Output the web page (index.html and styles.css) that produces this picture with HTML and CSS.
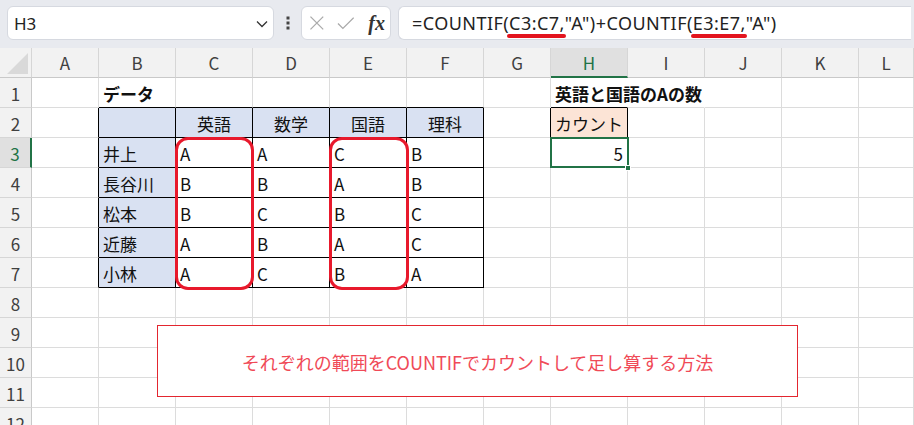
FILE: index.html
```html
<!DOCTYPE html>
<html lang="ja">
<head>
<meta charset="utf-8">
<title>COUNTIF</title>
<link rel="stylesheet" href="styles.css">
</head>
<body>
<div class="toolbar">
  <div class="namebox">
    <span class="nb-text">H3</span>
    <svg class="chev" width="12" height="8" viewBox="0 0 12 8"><path d="M1 1.5l5 5 5-5" stroke="#333" fill="none" stroke-width="1.3"/></svg>
  </div>
  <div class="dots">
    <svg width="4" height="14" viewBox="0 0 4 14"><rect x="0.5" y="0.5" width="3" height="3" fill="#444"/><rect x="0.5" y="5.5" width="3" height="3" fill="#444"/><rect x="0.5" y="10.5" width="3" height="3" fill="#444"/></svg>
  </div>
  <div class="fxbox">
    <svg width="16" height="16" viewBox="0 0 16 16"><path d="M1.5 1.5L14.5 14.5M14.5 1.5L1.5 14.5" stroke="#a9a9a9" stroke-width="1.3" fill="none"/></svg>
    <svg width="18" height="14" viewBox="0 0 18 14"><path d="M1 7.5L6 12.5L17 1.5" stroke="#a9a9a9" stroke-width="1.3" fill="none"/></svg>
    <span class="fx">fx</span>
  </div>
  <div class="formula">=COUNTIF(<span class="ul">C3:C7,</span>"A")+COUNTIF(<span class="ul">E3:E7,</span>"A")</div>
</div>

<div class="sheet">
  <!-- header -->
  <div class="c ch corner"><svg width="21" height="21" viewBox="0 0 21 21"><path d="M21 0V21H0Z" fill="#d9d9d9"/></svg></div>
  <div class="c ch">A</div><div class="c ch">B</div><div class="c ch">C</div><div class="c ch">D</div><div class="c ch">E</div><div class="c ch">F</div><div class="c ch">G</div><div class="c ch hsel">H</div><div class="c ch">I</div><div class="c ch">J</div><div class="c ch">K</div><div class="c ch">L</div>

  <!-- row 1 -->
  <div class="c rh">1</div>
  <div class="c"></div><div class="c bb b">データ</div><div class="c bb"></div><div class="c bb"></div><div class="c bb"></div><div class="c bb"></div><div class="c"></div><div class="c bb b over">英語と国語のAの数</div><div class="c nbr"></div><div class="c"></div><div class="c"></div><div class="c"></div>

  <!-- row 2 -->
  <div class="c rh">2</div>
  <div class="c br"></div><div class="c t blu"></div><div class="c t blu ctr">英語</div><div class="c t blu ctr">数学</div><div class="c t blu ctr">国語</div><div class="c t blu ctr">理科</div><div class="c br"></div><div class="c t org">カウント</div><div class="c"></div><div class="c"></div><div class="c"></div><div class="c"></div>

  <!-- row 3 -->
  <div class="c rh rsel">3</div>
  <div class="c br"></div><div class="c t blu">井上</div><div class="c t">A</div><div class="c t">A</div><div class="c t">C</div><div class="c t">B</div><div class="c"></div><div class="c rt sel">5<span class="handle"></span></div><div class="c"></div><div class="c"></div><div class="c"></div><div class="c"></div>

  <!-- row 4 -->
  <div class="c rh">4</div>
  <div class="c br"></div><div class="c t blu">長谷川</div><div class="c t">B</div><div class="c t">B</div><div class="c t">A</div><div class="c t">B</div><div class="c"></div><div class="c"></div><div class="c"></div><div class="c"></div><div class="c"></div><div class="c"></div>

  <!-- row 5 -->
  <div class="c rh">5</div>
  <div class="c br"></div><div class="c t blu">松本</div><div class="c t">B</div><div class="c t">C</div><div class="c t">B</div><div class="c t">C</div><div class="c"></div><div class="c"></div><div class="c"></div><div class="c"></div><div class="c"></div><div class="c"></div>

  <!-- row 6 -->
  <div class="c rh">6</div>
  <div class="c br"></div><div class="c t blu">近藤</div><div class="c t">A</div><div class="c t">B</div><div class="c t">A</div><div class="c t">C</div><div class="c"></div><div class="c"></div><div class="c"></div><div class="c"></div><div class="c"></div><div class="c"></div>

  <!-- row 7 -->
  <div class="c rh">7</div>
  <div class="c br"></div><div class="c t blu">小林</div><div class="c t">A</div><div class="c t">C</div><div class="c t">B</div><div class="c t">A</div><div class="c"></div><div class="c"></div><div class="c"></div><div class="c"></div><div class="c"></div><div class="c"></div>

  <!-- rows 8-12 -->
  <div class="c rh">8</div>
  <div class="c"></div><div class="c"></div><div class="c"></div><div class="c"></div><div class="c"></div><div class="c"></div><div class="c"></div><div class="c"></div><div class="c"></div><div class="c"></div><div class="c"></div><div class="c"></div>
  <div class="c rh">9</div>
  <div class="c"></div><div class="c"></div><div class="c"></div><div class="c"></div><div class="c"></div><div class="c"></div><div class="c"></div><div class="c"></div><div class="c"></div><div class="c"></div><div class="c"></div><div class="c"></div>
  <div class="c rh">10</div>
  <div class="c"></div><div class="c"></div><div class="c"></div><div class="c"></div><div class="c"></div><div class="c"></div><div class="c"></div><div class="c"></div><div class="c"></div><div class="c"></div><div class="c"></div><div class="c"></div>
  <div class="c rh">11</div>
  <div class="c"></div><div class="c"></div><div class="c"></div><div class="c"></div><div class="c"></div><div class="c"></div><div class="c"></div><div class="c"></div><div class="c"></div><div class="c"></div><div class="c"></div><div class="c"></div>
  <div class="c rh">12</div>
  <div class="c"></div><div class="c"></div><div class="c"></div><div class="c"></div><div class="c"></div><div class="c"></div><div class="c"></div><div class="c"></div><div class="c"></div><div class="c"></div><div class="c"></div><div class="c"></div>

  <!-- overlays -->
  <div class="ring ring-c"></div>
  <div class="ring ring-e"></div>
  <div class="note">それぞれの範囲をCOUNTIFでカウントして足し算する方法</div>
</div>
</body>
</html>
```

FILE: styles.css
```css
* { box-sizing: border-box; }
html, body {
  margin: 0;
  padding: 0;
  width: 914px;
  height: 425px;
  overflow: hidden;
  background: #ffffff;
  font-family: "Noto Sans CJK JP", "Noto Sans", sans-serif;
  color: #111;
}

/* ---------- toolbar ---------- */
.toolbar {
  height: 48px;
  background: #e8eaef;
  display: flex;
  align-items: flex-start;
  padding: 6px 3px 0 7px;
}
.namebox {
  width: 267px;
  height: 34px;
  background: #fff;
  border: 1px solid #d6d9e0;
  border-radius: 6px;
  display: flex;
  align-items: center;
  justify-content: space-between;
  padding: 0 5px 0 6px;
}
.nb-text {
  font-family: "Noto Sans", sans-serif;
  font-size: 17px;
  color: #222;
}
.chev { margin-top: 2px; }
.dots {
  width: 27px;
  height: 34px;
  display: flex;
  align-items: center;
  justify-content: center;
}
.fxbox {
  width: 90px;
  height: 34px;
  background: #fff;
  border: 1px solid #d6d9e0;
  border-radius: 6px;
  display: flex;
  align-items: center;
  padding: 0 5px 0 7px;
  gap: 12px;
}
.fx {
  font-family: "Liberation Serif", "DejaVu Serif", serif;
  font-style: italic;
  font-weight: bold;
  font-size: 20px;
  color: #333;
  margin-left: 2px;
}
.formula {
  flex: 1;
  height: 34px;
  margin-left: 7px;
  background: #fff;
  border: 1px solid #d6d9e0;
  border-radius: 6px 0 0 6px;
  border-right: none;
  display: flex;
  align-items: center;
  padding-left: 13px;
  font-family: "Noto Sans", sans-serif;
  font-size: 18px;
  letter-spacing: 0.45px;
  color: #222;
  white-space: pre;
}
.ul {
  position: relative;
}
.ul::after {
  content: "";
  position: absolute;
  left: -2px;
  right: -1px;
  bottom: -3px;
  height: 4px;
  border-radius: 2px;
  background: #e3141e;
}

/* ---------- sheet ---------- */
.sheet {
  position: relative;
  display: grid;
  grid-template-columns: 32px 67px 77px 77px 77px 77px 77px 67px 77px 77px 77px 77px 1fr;
  grid-template-rows: 30px repeat(12, 30px);
  font-size: 17px;
}
.c {
  border-right: 1px solid #dcdcdc;
  border-bottom: 1px solid #dcdcdc;
  display: flex;
  align-items: center;
  padding: 2px 4px 0 4px;
  white-space: nowrap;
  min-width: 0;
}
.ch {
  background: #f2f2f2;
  justify-content: center;
  color: #404040;
  border-right-color: #d6d6d6;
  border-bottom-color: #c9c9c9;
  padding: 0;
}
.corner {
  align-items: flex-end;
  justify-content: flex-end;
  padding: 0 3px 3px 0;
}
.hsel {
  background: #e0e0e0;
  color: #217346;
  border-bottom: 2px solid #217346;
}
.rh {
  background: #f2f2f2;
  justify-content: center;
  color: #404040;
  border-right-color: #c9c9c9;
  border-bottom-color: #d6d6d6;
  padding: 2px 0 0 0;
}
.rsel {
  background: #e0e0e0;
  color: #217346;
  border-right: 2px solid #217346;
}
.b { font-weight: bold; }
.bb { border-bottom-color: #000; }
.br { border-right-color: #000; }
.nbr { border-right-color: transparent; }
.t { border-right-color: #000; border-bottom-color: #000; }
.blu { background: #d9e1f2; }
.org { background: #fce4d6; }
.ctr { justify-content: center; }
.rt { justify-content: flex-end; }
.over {
  position: relative;
  overflow: visible;
  border-right-color: transparent;
}
.sel {
  position: relative;
}
.sel::after {
  content: "";
  position: absolute;
  left: -1px;
  top: -1px;
  right: -2px;
  bottom: -1px;
  border: 2px solid #217346;
}
.handle {
  position: absolute;
  right: -4px;
  bottom: -4px;
  width: 6px;
  height: 6px;
  background: #217346;
  border: 1px solid #fff;
  z-index: 2;
}

/* ---------- overlays ---------- */
.ring {
  position: absolute;
  top: 89px;
  height: 153px;
  border: 3px solid #e8192c;
  border-radius: 13px;
}
.ring-c { left: 175px; width: 79px; }
.ring-e { left: 329px; width: 80px; }

.note {
  position: absolute;
  left: 157px;
  top: 277px;
  width: 641px;
  height: 72px;
  background: #fff;
  border: 1px solid #e3262f;
  display: flex;
  align-items: center;
  justify-content: center;
  padding-top: 2px;
  font-size: 18px;
  color: #f04a57;
}
```
